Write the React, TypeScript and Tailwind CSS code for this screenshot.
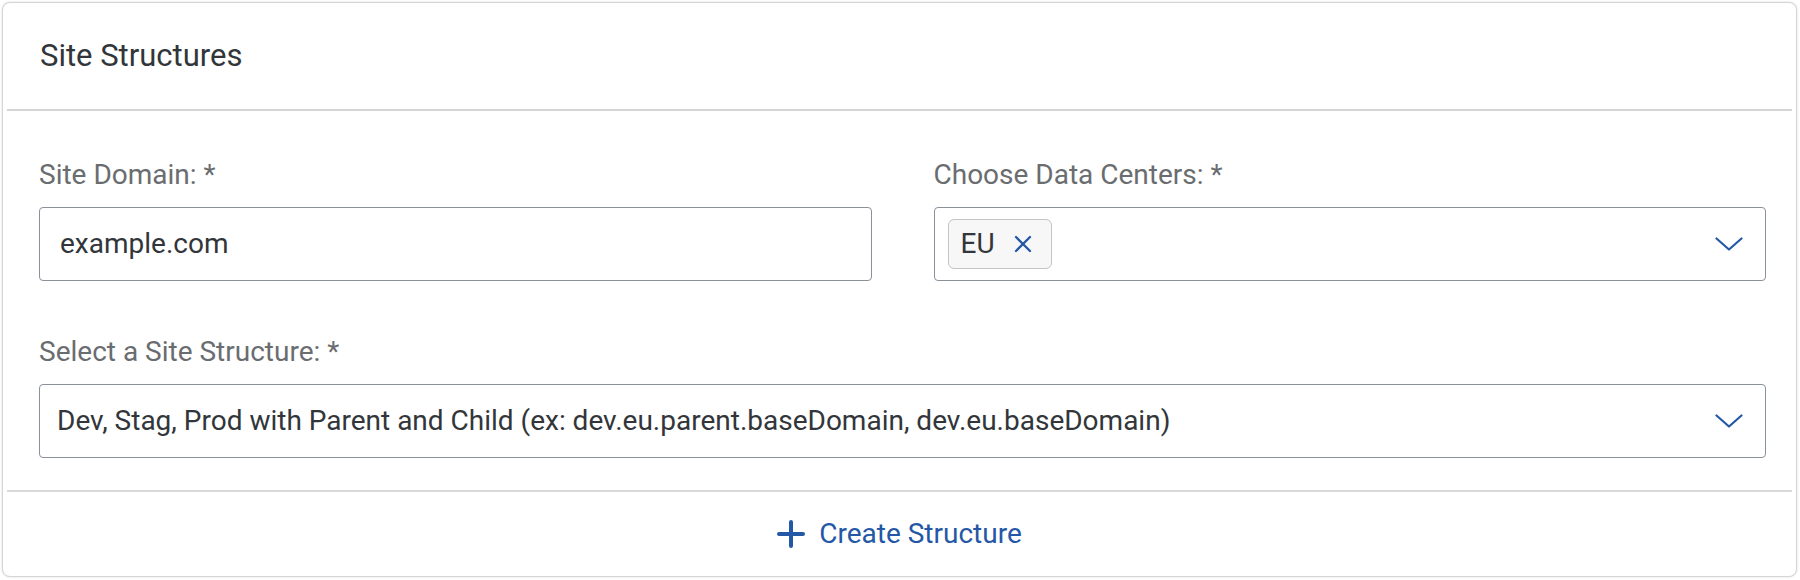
import { X } from 'lucide-react';

const fontStack = { fontFamily: 'Roboto, "Liberation Sans", sans-serif' };

const FieldLabel = ({ children }: { children: React.ReactNode }) => (
  <div className="flex h-[36px] items-center text-[28px] text-[#6a6d70]">{children}</div>
);

const Chevron = () => (
  <svg width="28" height="14" viewBox="0 0 28 14" fill="none" className="shrink-0">
    <path d="M1.5 1.5 L14 12.5 L26.5 1.5" stroke="#2458a6" strokeWidth="2.2" strokeLinecap="round" strokeLinejoin="round" />
  </svg>
);

const SiteStructures = () => {
  return (
    <div className="mx-[2px] mt-[2px] flex h-[575px] w-[1795px] flex-col rounded-[8px] border border-[#d6d6d6] bg-white shadow-[0_0_2px_rgba(0,0,0,0.18)]">
      <div className="flex h-[106px] items-center pl-[37px] text-[31px] text-[#32363a]">Site Structures</div>
      <div className="mx-[4px] h-[2px] bg-[#d4d4d4]" />

      <div className="flex flex-1 flex-col pl-[36px] pr-[30px] pt-[46px]">
        <div className="grid grid-cols-2 gap-x-[62px]">
          <div className="flex flex-col gap-[14px]">
            <FieldLabel>Site Domain: *</FieldLabel>
            <div className="flex h-[74px] items-center rounded-[4px] border border-[#89919a] pl-[20px] text-[28px] text-[#32363a]">
              example.com
            </div>
          </div>
          <div className="flex flex-col gap-[14px]">
            <FieldLabel>Choose Data Centers: *</FieldLabel>
            <div className="flex h-[74px] items-center justify-between rounded-[4px] border border-[#89919a] pl-[13px] pr-[22px]">
              <div className="flex h-[50px] items-center gap-[14px] rounded-[6px] border border-[#c4c4c4] bg-[#f7f7f7] pl-[12px] pr-[14px] text-[28px] text-[#32363a]">
                <span>EU</span>
                <X size={28} strokeWidth={2} color="#2458a6" />
              </div>
              <Chevron />
            </div>
          </div>
        </div>

        <div className="mt-[53px] flex flex-col gap-[14px]">
          <FieldLabel>Select a Site Structure: *</FieldLabel>
          <div className="flex h-[74px] items-center justify-between rounded-[4px] border border-[#89919a] pl-[17px] pr-[22px] text-[28px] text-[#32363a]">
            <span>Dev, Stag, Prod with Parent and Child (ex: dev.eu.parent.baseDomain, dev.eu.baseDomain)</span>
            <Chevron />
          </div>
        </div>
      </div>

      <div className="mx-[4px] h-[2px] bg-[#d9d9d9]" />
      <div className="flex h-[84px] items-center justify-center gap-[14px] text-[28px] text-[#2458a6]">
        <svg width="28" height="28" viewBox="0 0 28 28" fill="none">
          <path d="M14 2 V26 M2 14 H26" stroke="#2458a6" strokeWidth="4" strokeLinecap="round" />
        </svg>
        <span>Create Structure</span>
      </div>
    </div>
  );
};

export default function App() {
  return (
    <div className="h-[580px] w-[1800px] overflow-hidden bg-white" style={fontStack}>
      <SiteStructures />
    </div>
  );
}
